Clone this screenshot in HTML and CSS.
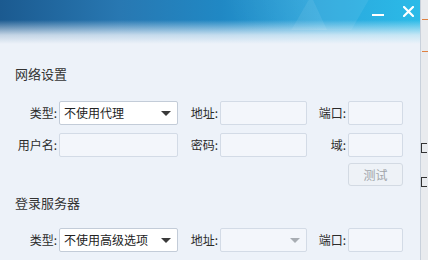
FILE: index.html
```html
<!DOCTYPE html>
<html lang="zh-CN">
<head>
    <meta charset="UTF-8">
    <title>网络设置</title>
    <link rel="stylesheet" href="styles.css">
</head>
<body>
    <div class="window">
        <div class="titlebar">
            <div class="facet facet-a"></div>
            <div class="facet facet-b"></div>
            <div class="title-btns">
                <span class="btn-min"></span>
                <svg class="btn-close" width="11" height="11" viewBox="0 0 11 11">
                    <path d="M1 1L10 10M10 1L1 10" stroke="#fff" stroke-width="2.2" stroke-linecap="round"/>
                </svg>
            </div>
        </div>

        <div class="content">
            <h3 class="section-title">网络设置</h3>

            <div class="form-row">
                <label>类型:</label>
                <div class="select">不使用代理<span class="arrow"></span></div>
                <label>地址:</label>
                <div class="input"></div>
                <label>端口:</label>
                <div class="input"></div>
            </div>

            <div class="form-row">
                <label>用户名:</label>
                <div class="input"></div>
                <label>密码:</label>
                <div class="input"></div>
                <label>域:</label>
                <div class="input"></div>
            </div>

            <div class="btn-row">
                <button class="test-btn" disabled>测试</button>
            </div>

            <h3 class="section-title second">登录服务器</h3>

            <div class="form-row">
                <label>类型:</label>
                <div class="select">不使用高级选项<span class="arrow"></span></div>
                <label>地址:</label>
                <div class="select disabled"><span class="arrow"></span></div>
                <label>端口:</label>
                <div class="input"></div>
            </div>
        </div>
    </div>

    <!-- edge of the window behind, only fragments show -->
    <div class="behind">
        <span class="mark orange"></span>
        <span class="mark orange low"></span>
        <span class="frag f1"></span>
        <span class="frag f2"></span>
    </div>
</body>
</html>
```

FILE: styles.css
```css
* {
    box-sizing: border-box;
}
body {
    margin: 0;
    width: 428px;
    height: 260px;
    overflow: hidden;
    display: flex;
    font-family: "Noto Sans CJK SC", "Noto Sans", sans-serif;
    font-size: 12px;
    color: #333;
    background: #eef2f8;
}
.window {
    width: 421px;
    height: 260px;
    background: #edf2f9;
    border-right: 1px solid #c9d1db;
    position: relative;
}
.titlebar {
    position: relative;
    height: 44px;
    background:
        linear-gradient(to bottom, rgba(237, 242, 249, 0) 0px, rgba(237, 242, 249, 0) 20px, rgba(237, 242, 249, 0.8) 35px, #edf2f9 44px),
        linear-gradient(to right, #1b5a90 0px, #2878b2 120px, #2088c4 220px, #2aa6dc 320px, #2bbbe8 421px);
    overflow: hidden;
}
.facet {
    position: absolute;
    top: 0;
    height: 30px;
}
.facet-a {
    left: 230px;
    width: 90px;
    background: linear-gradient(to right, rgba(255, 255, 255, 0), rgba(255, 255, 255, 0.08));
    transform: skewX(25deg);
}
.facet-b {
    left: 300px;
    width: 60px;
    background: rgba(255, 255, 255, 0.07);
    transform: skewX(-30deg);
}
.title-btns {
    position: absolute;
    top: 6px;
    right: 6px;
    display: flex;
    align-items: center;
    gap: 19px;
}
.btn-min {
    display: block;
    width: 12px;
    height: 2px;
    margin-top: 7px;
    background: #fff;
}
.btn-close {
    display: block;
}

.content {
    padding: 21px 0 0 15px;
}
.section-title {
    margin: 0;
    font-size: 13px;
    font-weight: normal;
    line-height: 18px;
    color: #333;
}
.section-title.second {
    margin-top: 8px;
}
.form-row {
    display: grid;
    grid-template-columns: 44px 119px 42px 87px 41px 55px;
    align-items: center;
    height: 24px;
    margin-top: 8px;
}
.section-title + .form-row {
    margin-top: 18px;
}
.section-title.second + .form-row {
    margin-top: 16px;
}
.form-row label {
    text-align: right;
    padding-right: 2px;
    white-space: nowrap;
    line-height: 24px;
    color: #2b2b2b;
}
.input,
.select {
    height: 24px;
    border: 1px solid #d3dbe6;
    border-radius: 2px;
    background: #f3f6fb;
}
.select {
    position: relative;
    background: #fff;
    border-color: #c3ccd8;
    padding-left: 4px;
    line-height: 22px;
    color: #222;
}
.select.disabled {
    background: #f3f6fb;
    border-color: #d3dbe6;
}
.arrow {
    position: absolute;
    right: 6px;
    top: 9px;
    border-left: 5px solid transparent;
    border-right: 5px solid transparent;
    border-top: 5px solid #3a3a3a;
}
.select.disabled .arrow {
    border-top-color: #a8adb3;
}
.btn-row {
    display: flex;
    justify-content: flex-end;
    width: 388px;
    margin-top: 6px;
}
.test-btn {
    width: 55px;
    height: 23px;
    border: 1px solid #d3dae3;
    border-radius: 3px;
    background: #eef2f7;
    color: #a0a4a9;
    font-family: "Noto Sans CJK SC", sans-serif;
    font-size: 12px;
    padding: 0;
}

.behind {
    position: relative;
    flex: 1;
    background: #e9ebee;
}
.mark {
    position: absolute;
    left: 1px;
    width: 6px;
    height: 1px;
}
.orange {
    top: 19px;
    background: #e0803f;
}
.orange.low {
    top: 51px;
}
.frag {
    position: absolute;
    left: 0;
    width: 6px;
    height: 10px;
    border: 1px solid #333;
    border-right: none;
}
.f1 {
    top: 143px;
}
.f2 {
    top: 177px;
}
```
